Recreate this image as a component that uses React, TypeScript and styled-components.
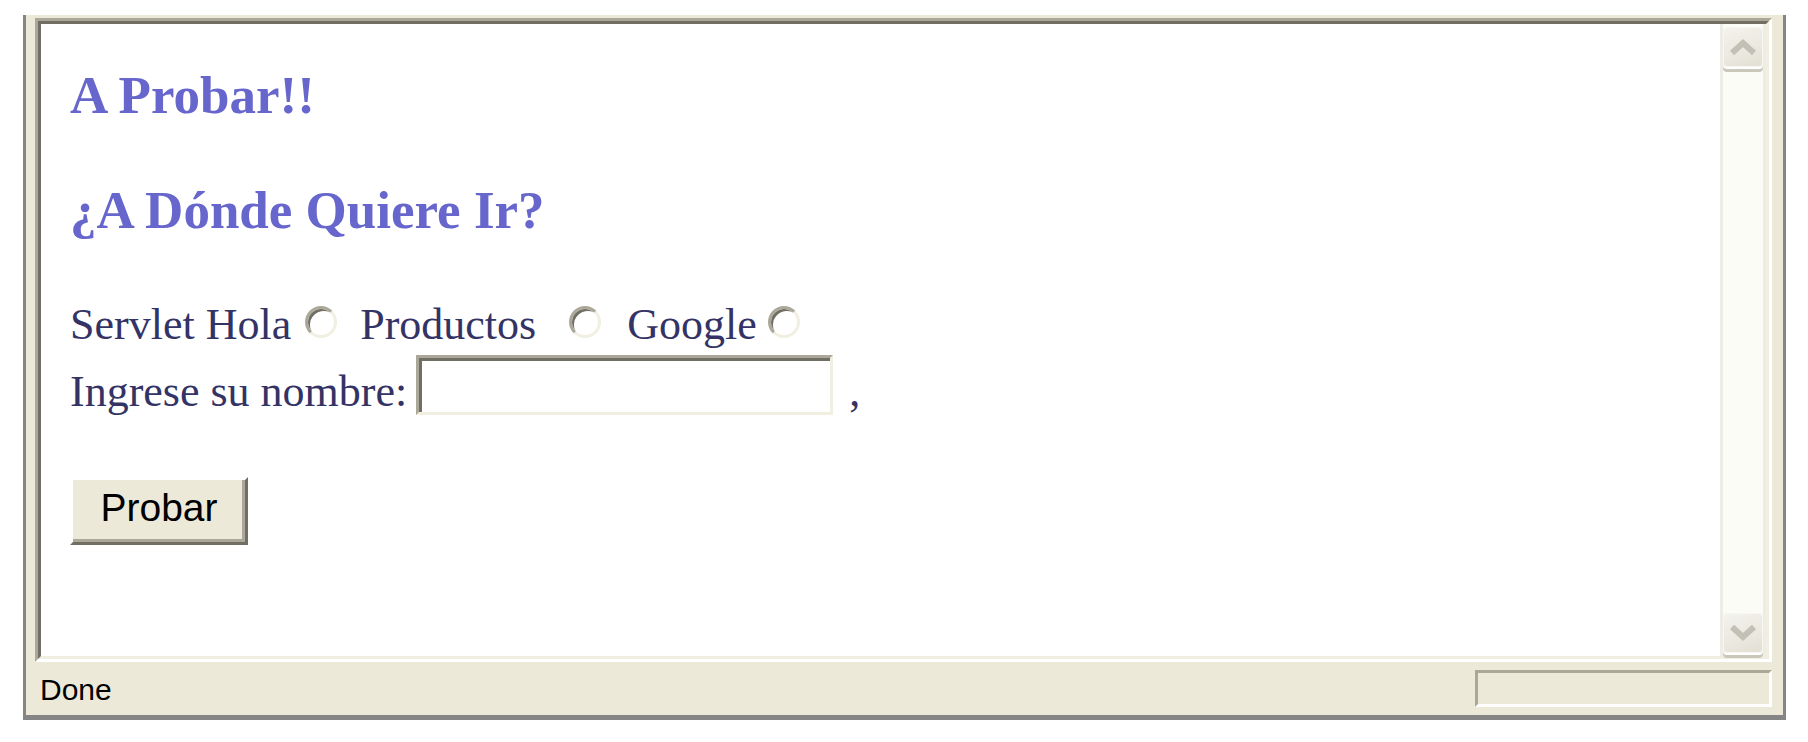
import React from "react";
import styled, { createGlobalStyle } from "styled-components";

const Global = createGlobalStyle`
  html, body { margin: 0; padding: 0; background: #ffffff; }
  body { font-family: "Liberation Serif", "Times New Roman", serif; }
  * { box-sizing: border-box; }
`;

const Window = styled.div`
  margin: 15px 0 0 23px;
  width: 1763px;
  height: 705px;
  background: #ece9d8;
  border-left: 3px solid #858585;
  border-right: 3px solid #858585;
  border-bottom: 5px solid #858585;
  box-shadow: 0 5px 0 #aaa9a4;
  padding: 3px 11px 0 9px;
  display: flex;
  flex-direction: column;
`;

const Frame = styled.div`
  height: 644px;
  border: 3px solid;
  border-color: #aca899 #ffffff #ffffff #aca899;
`;

const FrameInner = styled.div`
  height: 100%;
  border: 3px solid;
  border-color: #716f64 #f1efe2 #f1efe2 #716f64;
  background: #ffffff;
  display: flex;
`;

const Main = styled.div`
  flex: 1;
  padding: 41px 0 0 29px;
  display: flex;
  flex-direction: column;
  align-items: flex-start;
`;

const Heading = styled.h1<{ $after: number }>`
  margin: 0 0 ${(p) => p.$after}px 0;
  font-family: "Liberation Serif", "Times New Roman", serif;
  font-size: 53px;
  font-weight: bold;
  line-height: 60px;
  color: #6666cc;
  white-space: nowrap;
`;

const FormRow = styled.div<{ $top?: number }>`
  display: flex;
  align-items: flex-start;
  margin-top: ${(p) => p.$top ?? 0}px;
`;

const Label = styled.span<{ $top?: number }>`
  font-size: 44px;
  line-height: 50px;
  color: #333366;
  white-space: pre;
  margin-top: ${(p) => p.$top ?? 0}px;
`;

const Radio = styled.input<{ $ml: number; $mr: number }>`
  appearance: none;
  -webkit-appearance: none;
  width: 32px;
  height: 32px;
  margin: 6px ${(p) => p.$mr}px 0 ${(p) => p.$ml}px;
  border-radius: 50%;
  border: 3px solid;
  border-color: #aca899 #f1efe2 #f1efe2 #aca899;
  box-shadow: inset 3px 3px 0 -1px #716f64;
  background: #ffffff;
  flex: none;
`;

const TextField = styled.input`
  width: 417px;
  height: 60px;
  margin: 0 0 0 9px;
  border: 3px solid;
  border-color: #aca899 #f1efe2 #f1efe2 #aca899;
  box-shadow: inset 3px 3px 0 #716f64;
  background: #ffffff;
  outline: none;
  flex: none;
`;

const Comma = styled(Label)`
  margin-left: 16px;
`;

const SubmitButton = styled.button`
  margin-top: 60px;
  width: 178px;
  height: 68px;
  padding: 0 0 7px 0;
  border: 3px solid;
  border-color: #ffffff #716f64 #716f64 #ffffff;
  box-shadow: inset -3px -3px 0 #aca899;
  background: #ece9d8;
  font-family: "Liberation Sans", Arial, sans-serif;
  font-size: 39px;
  color: #000000;
  display: flex;
  align-items: center;
  justify-content: center;
`;

const ScrollTrack = styled.div`
  width: 46px;
  flex: none;
  border-left: 3px solid #eeede5;
  border-right: 3px solid #eeede5;
  background: #fcfcf7;
  padding: 3px 0;
  display: flex;
  flex-direction: column;
  justify-content: space-between;
`;

const ScrollButton = styled.div`
  width: 40px;
  height: 40px;
  border-radius: 4px;
  border: 1px solid #f7f6f1;
  background: linear-gradient(160deg, #f3f2ec 0%, #e9e7dd 70%, #e1dfd3 100%);
  box-shadow: 0 2px 0 #ffffff, 0 5px 0 #cac8bb;
  display: flex;
  align-items: center;
  justify-content: center;
`;

const StatusBar = styled.div`
  height: 53px;
  display: flex;
  align-items: center;
  justify-content: space-between;
  padding: 2px 0 0 5px;
`;

const StatusText = styled.span`
  font-family: "Liberation Sans", Arial, sans-serif;
  font-size: 30px;
  color: #000000;
`;

const StatusPanel = styled.div`
  width: 297px;
  height: 37px;
  margin-top: -2px;
  border: 3px solid;
  border-color: #aca899 #ffffff #ffffff #aca899;
`;

const Chevron = ({ down }: { down?: boolean }) => (
  <svg width="28" height="18" viewBox="0 0 28 18" style={{ transform: down ? "rotate(180deg)" : undefined }}>
    <polyline points="3,15 14,5 25,15" fill="none" stroke="#c3c1b5" strokeWidth="6" />
  </svg>
);

export default function App() {
  return (
    <>
      <Global />
      <Window>
        <Frame>
          <FrameInner>
            <Main>
              <Heading $after={55}>A Probar!!</Heading>
              <Heading as="h2" $after={60}>¿A Dónde Quiere Ir?</Heading>
              <FormRow>
                <Label>Servlet Hola</Label>
                <Radio type="radio" name="destino" $ml={14} $mr={23} />
                <Label>Productos</Label>
                <Radio type="radio" name="destino" $ml={33} $mr={26} />
                <Label>Google</Label>
                <Radio type="radio" name="destino" $ml={11} $mr={0} />
              </FormRow>
              <FormRow $top={5}>
                <Label $top={12}>Ingrese su nombre:</Label>
                <TextField type="text" />
                <Comma $top={12}>,</Comma>
              </FormRow>
              <SubmitButton type="button">Probar</SubmitButton>
            </Main>
            <ScrollTrack>
              <ScrollButton>
                <Chevron />
              </ScrollButton>
              <ScrollButton>
                <Chevron down />
              </ScrollButton>
            </ScrollTrack>
          </FrameInner>
        </Frame>
        <StatusBar>
          <StatusText>Done</StatusText>
          <StatusPanel />
        </StatusBar>
      </Window>
    </>
  );
}
